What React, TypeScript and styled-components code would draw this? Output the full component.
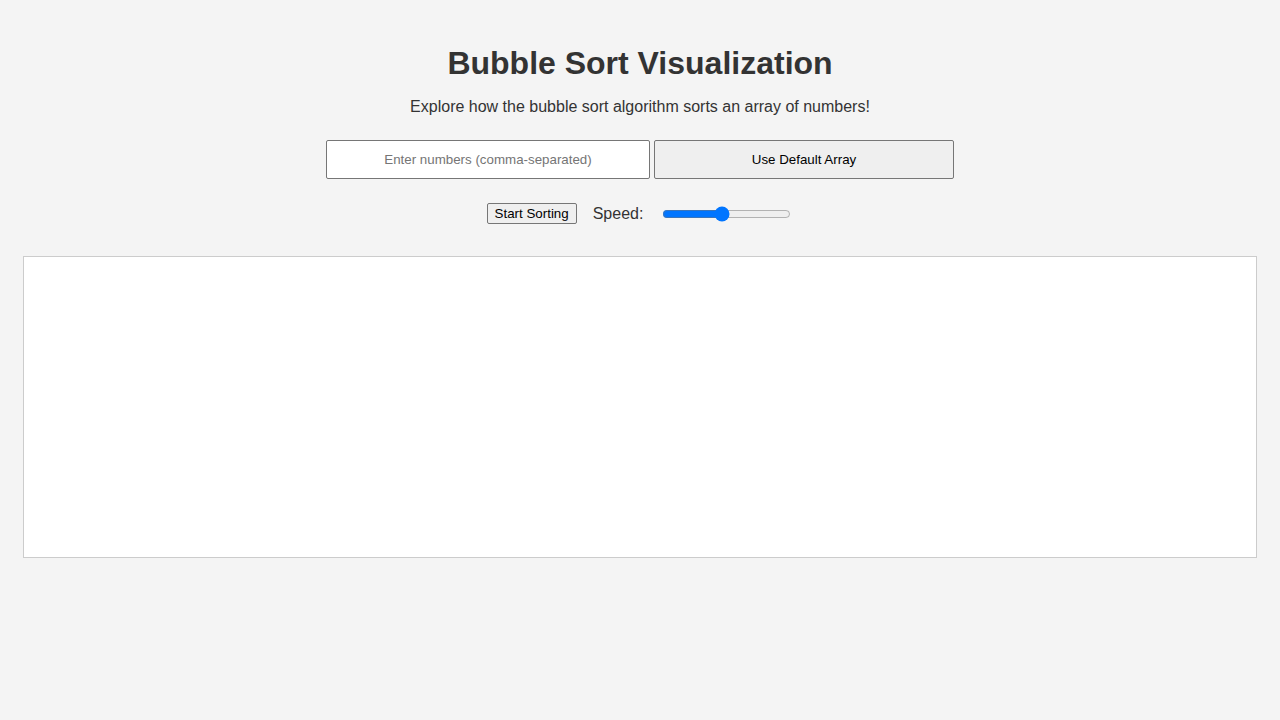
import React from "react";
import styled, { createGlobalStyle } from "styled-components";

const Global = createGlobalStyle`
  html, body { margin: 0; padding: 0; background: #f4f4f4; }
  body { font-family: "Liberation Sans", Arial, sans-serif; color: #333; }
`;

const Page = styled.div`
  padding: 45px 23px 0;
  display: flex;
  flex-direction: column;
  align-items: center;
`;

const Title = styled.h1`
  margin: 0;
  font-size: 32px;
  line-height: 37px;
  font-weight: bold;
  color: #333;
`;

const Subtitle = styled.p`
  margin: 16px 0 0;
  font-size: 16px;
  line-height: 18px;
  color: #333;
`;

const InputRow = styled.div`
  margin-top: 24px;
  display: flex;
  gap: 4px;
`;

const NumberInput = styled.input`
  box-sizing: border-box;
  width: 324px;
  height: 39px;
  border: 1px solid #767676;
  border-radius: 2px;
  background: #fff;
  text-align: center;
  font-family: "Liberation Sans", Arial, sans-serif;
  font-size: 13.33px;
  outline: none;
  &::placeholder { color: #757575; }
`;

const WideButton = styled.button`
  box-sizing: border-box;
  width: 300px;
  height: 39px;
  border: 1px solid #767676;
  border-radius: 2px;
  background: #efefef;
  color: #000;
  font-family: "Liberation Sans", Arial, sans-serif;
  font-size: 13.33px;
`;

const ControlRow = styled.div`
  margin-top: 24px;
  display: flex;
  align-items: center;
  height: 21px;
`;

const SmallButton = styled.button`
  box-sizing: border-box;
  height: 21px;
  padding: 1px 7px;
  border: 1px solid #767676;
  border-radius: 2px;
  background: #efefef;
  color: #000;
  font-family: "Liberation Sans", Arial, sans-serif;
  font-size: 13.33px;
`;

const Label = styled.label`
  margin-left: 16px;
  margin-right: 17px;
  font-size: 16px;
  color: #333;
`;

const Range = styled.input`
  width: 129px;
  margin: 2px;
  accent-color: #0075ff;
`;

const Canvas = styled.div`
  box-sizing: border-box;
  align-self: stretch;
  margin-top: 32px;
  height: 302px;
  background: #fff;
  border: 1px solid #ccc;
`;

export default function App() {
  return (
    <>
      <Global />
      <Page>
        <Title>Bubble Sort Visualization</Title>
        <Subtitle>Explore how the bubble sort algorithm sorts an array of numbers!</Subtitle>
        <InputRow>
          <NumberInput placeholder="Enter numbers (comma-separated)" />
          <WideButton>Use Default Array</WideButton>
        </InputRow>
        <ControlRow>
          <SmallButton>Start Sorting</SmallButton>
          <Label htmlFor="speed">Speed:</Label>
          <Range id="speed" type="range" min={0} max={100} defaultValue={46} />
        </ControlRow>
        <Canvas />
      </Page>
    </>
  );
}
